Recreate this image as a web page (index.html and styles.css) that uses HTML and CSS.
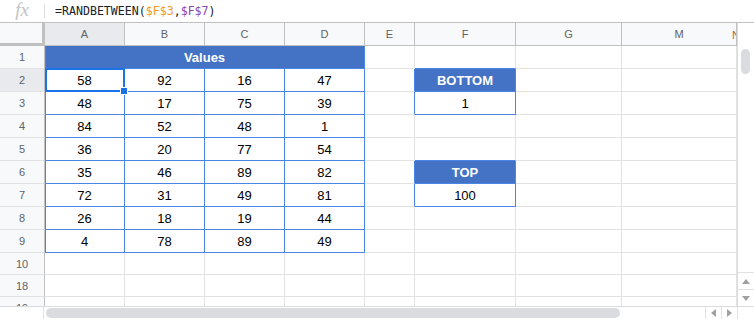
FILE: index.html
```html
<!DOCTYPE html>
<html>

<head>
    <title>RANDBETWEEN</title>
    <link rel="stylesheet" href="styles.css">
</head>

<body>
    <div class="formula-bar">
        <span class="fx">fx</span>
        <span class="sep"></span>
        <span class="formula">=RANDBETWEEN(<span class="ref1">$F$3</span>,<span class="ref2">$F$7</span>)</span>
    </div>

    <div class="sheet">
        <div class="grid-wrap">
            <table class="grid">
                <colgroup>
                    <col style="width: 45px">
                    <col style="width: 80px">
                    <col style="width: 80px">
                    <col style="width: 80px">
                    <col style="width: 80px">
                    <col style="width: 50px">
                    <col style="width: 101px">
                    <col style="width: 106px">
                    <col style="width: 115px">
                </colgroup>
                <tr class="colhead">
                    <th class="corner"></th>
                    <th class="on">A</th>
                    <th>B</th>
                    <th>C</th>
                    <th>D</th>
                    <th>E</th>
                    <th>F</th>
                    <th>G</th>
                    <th class="last">M<span class="clip">N</span></th>
                </tr>
                <tr>
                    <th class="rowhead">1</th>
                    <td class="b first head" colspan="4">Values</td>
                    <td></td>
                    <td class="bt"></td>
                    <td></td>
                    <td></td>
                </tr>
                <tr>
                    <th class="rowhead on">2</th>
                    <td class="b first cur">58<span class="select"></span><span class="handle"></span></td>
                    <td class="b">92</td>
                    <td class="b">16</td>
                    <td class="b">47</td>
                    <td class="bl"></td>
                    <td class="b head">BOTTOM</td>
                    <td></td>
                    <td></td>
                </tr>
                <tr>
                    <th class="rowhead">3</th>
                    <td class="b first">48</td>
                    <td class="b">17</td>
                    <td class="b">75</td>
                    <td class="b">39</td>
                    <td class="bl"></td>
                    <td class="b">1</td>
                    <td></td>
                    <td></td>
                </tr>
                <tr>
                    <th class="rowhead">4</th>
                    <td class="b first">84</td>
                    <td class="b">52</td>
                    <td class="b">48</td>
                    <td class="b">1</td>
                    <td></td>
                    <td></td>
                    <td></td>
                    <td></td>
                </tr>
                <tr>
                    <th class="rowhead">5</th>
                    <td class="b first">36</td>
                    <td class="b">20</td>
                    <td class="b">77</td>
                    <td class="b">54</td>
                    <td></td>
                    <td class="bt"></td>
                    <td></td>
                    <td></td>
                </tr>
                <tr>
                    <th class="rowhead">6</th>
                    <td class="b first">35</td>
                    <td class="b">46</td>
                    <td class="b">89</td>
                    <td class="b">82</td>
                    <td class="bl"></td>
                    <td class="b head">TOP</td>
                    <td></td>
                    <td></td>
                </tr>
                <tr>
                    <th class="rowhead">7</th>
                    <td class="b first">72</td>
                    <td class="b">31</td>
                    <td class="b">49</td>
                    <td class="b">81</td>
                    <td class="bl"></td>
                    <td class="b">100</td>
                    <td></td>
                    <td></td>
                </tr>
                <tr>
                    <th class="rowhead">8</th>
                    <td class="b first">26</td>
                    <td class="b">18</td>
                    <td class="b">19</td>
                    <td class="b">44</td>
                    <td></td>
                    <td></td>
                    <td></td>
                    <td></td>
                </tr>
                <tr>
                    <th class="rowhead">9</th>
                    <td class="b first">4</td>
                    <td class="b">78</td>
                    <td class="b">89</td>
                    <td class="b">49</td>
                    <td></td>
                    <td></td>
                    <td></td>
                    <td></td>
                </tr>
                <tr class="short">
                    <th class="rowhead">10</th>
                    <td></td><td></td><td></td><td></td><td></td><td></td><td></td><td></td>
                </tr>
                <tr class="short">
                    <th class="rowhead">18</th>
                    <td></td><td></td><td></td><td></td><td></td><td></td><td></td><td></td>
                </tr>
                <tr class="short">
                    <th class="rowhead">19</th>
                    <td></td><td></td><td></td><td></td><td></td><td></td><td></td><td></td>
                </tr>
            </table>
        </div>

        <div class="vscroll">
            <div class="vtop"></div>
            <div class="vtrack"><div class="vthumb"></div></div>
            <div class="arrow">
                <svg width="8" height="5" viewBox="0 0 8 5"><path d="M0 5 L4 0 L8 5 Z" fill="#a0a0a0"/></svg>
            </div>
            <div class="arrow">
                <svg width="8" height="5" viewBox="0 0 8 5"><path d="M0 0 L4 5 L8 0 Z" fill="#a0a0a0"/></svg>
            </div>
        </div>
    </div>

    <div class="hbar">
        <div class="hleft"></div>
        <div class="htrack"><div class="hthumb"></div></div>
        <div class="harrow">
            <svg width="5" height="8" viewBox="0 0 5 8"><path d="M5 0 L0 4 L5 8 Z" fill="#a0a0a0"/></svg>
        </div>
        <div class="harrow">
            <svg width="5" height="8" viewBox="0 0 5 8"><path d="M0 0 L5 4 L0 8 Z" fill="#a0a0a0"/></svg>
        </div>
        <div class="hcorner"></div>
    </div>
    <div class="tabs"></div>
</body>

</html>
```

FILE: styles.css
```css
body {
    margin: 0;
    width: 754px;
    height: 319px;
    overflow: hidden;
    background-color: #fff;
    font-family: "Liberation Sans", Arial, sans-serif;
}

.formula-bar {
    height: 22px;
    display: flex;
    align-items: center;
}

.fx {
    width: 44px;
    text-align: center;
    font-family: "Liberation Serif", serif;
    font-style: italic;
    font-size: 19px;
    color: #c4c4c4;
    margin-top: -2px;
}

.sep {
    width: 1px;
    height: 14px;
    background-color: #dadce0;
}

.formula {
    margin-left: 10px;
    font-family: "DejaVu Sans Mono", monospace;
    font-size: 11.6px;
    color: #202124;
}

.ref1 {
    color: #f29a1f;
}

.ref2 {
    color: #8e44ad;
}

.sheet {
    display: flex;
    height: 283px;
    border-top: 1px solid #c0c0c0;
}

.grid-wrap {
    width: 737px;
    height: 283px;
    overflow: hidden;
}

.grid {
    table-layout: fixed;
    width: 737px;
    border-collapse: separate;
    border-spacing: 0;
}

.grid th,
.grid td {
    box-sizing: border-box;
    height: 23px;
    padding: 0;
    text-align: center;
    white-space: nowrap;
    overflow: hidden;
    border-right: 1px solid #e2e2e2;
    border-bottom: 1px solid #e2e2e2;
    font-size: 13px;
    color: #000;
}

.grid tr.short th,
.grid tr.short td {
    height: 22px;
}

.colhead th {
    background-color: #f8f9fa;
    border-right: 1px solid #c0c0c0;
    border-bottom: 1px solid #c0c0c0;
    font-size: 11px;
    font-weight: normal;
    color: #5f6368;
}

.colhead th.corner {
    border-right: 3px solid #c0c0c0;
    border-bottom: 3px solid #c0c0c0;
}

.colhead th.last {
    position: relative;
}

.clip {
    position: absolute;
    right: -4px;
    top: 6px;
    width: 8px;
    overflow: hidden;
    color: #b06a2a;
}

.grid th.rowhead {
    background-color: #f8f9fa;
    border-right: 1px solid #c0c0c0;
    border-bottom: 1px solid #e2e2e2;
    font-size: 11px;
    font-weight: normal;
    color: #5f6368;
}

.grid th.on {
    background-color: #e8eaed;
}

.grid td.b {
    border-right: 1px solid #4a86e8;
    border-bottom: 1px solid #4a86e8;
}

.grid td.bl {
    border-right: 1px solid #4a86e8;
}

.grid td.bt {
    border-bottom: 1px solid #4a86e8;
}

.grid td.first {
    box-shadow: inset 1px 0 0 #4a86e8;
}

.grid td.head {
    background-color: #4472c4;
    color: #fff;
    font-weight: bold;
}

.grid td.cur {
    position: relative;
    overflow: visible;
}

.select {
    position: absolute;
    left: 0;
    top: -1px;
    right: -1px;
    bottom: -1px;
    border: 2px solid #1a73e8;
}

.handle {
    position: absolute;
    right: -4px;
    bottom: -4px;
    width: 6px;
    height: 6px;
    background-color: #1a73e8;
    border: 1px solid #fff;
}

.vscroll {
    width: 17px;
    display: flex;
    flex-direction: column;
    border-left: 1px solid #dadce0;
    box-sizing: border-box;
}

.vtop {
    height: 24px;
}

.vtrack {
    flex: 1;
}

.vthumb {
    width: 9px;
    height: 25px;
    margin: 2px 0 0 3px;
    border-radius: 5px;
    background-color: #dadce0;
}

.arrow {
    height: 16px;
    border-top: 1px solid #e2e2e2;
    display: flex;
    justify-content: center;
    align-items: center;
}

.hbar {
    display: flex;
    height: 12px;
    border-top: 1px solid #dadce0;
    background-color: #fff;
}

.hleft {
    width: 44px;
    border-right: 1px solid #e2e2e2;
    box-sizing: border-box;
}

.htrack {
    width: 662px;
    padding: 1px 0 0 2px;
    box-sizing: border-box;
}

.hthumb {
    width: 574px;
    height: 10px;
    border-radius: 5px;
    background-color: #dadce0;
}

.harrow {
    width: 16px;
    border-left: 1px solid #e2e2e2;
    box-sizing: border-box;
    display: flex;
    justify-content: center;
    align-items: center;
}

.hcorner {
    width: 17px;
    border-left: 1px solid #e2e2e2;
    box-sizing: border-box;
}

.tabs {
    height: 3px;
    background-color: #f1f3f4;
    border-top: 1px solid #e2e2e2;
}
```
